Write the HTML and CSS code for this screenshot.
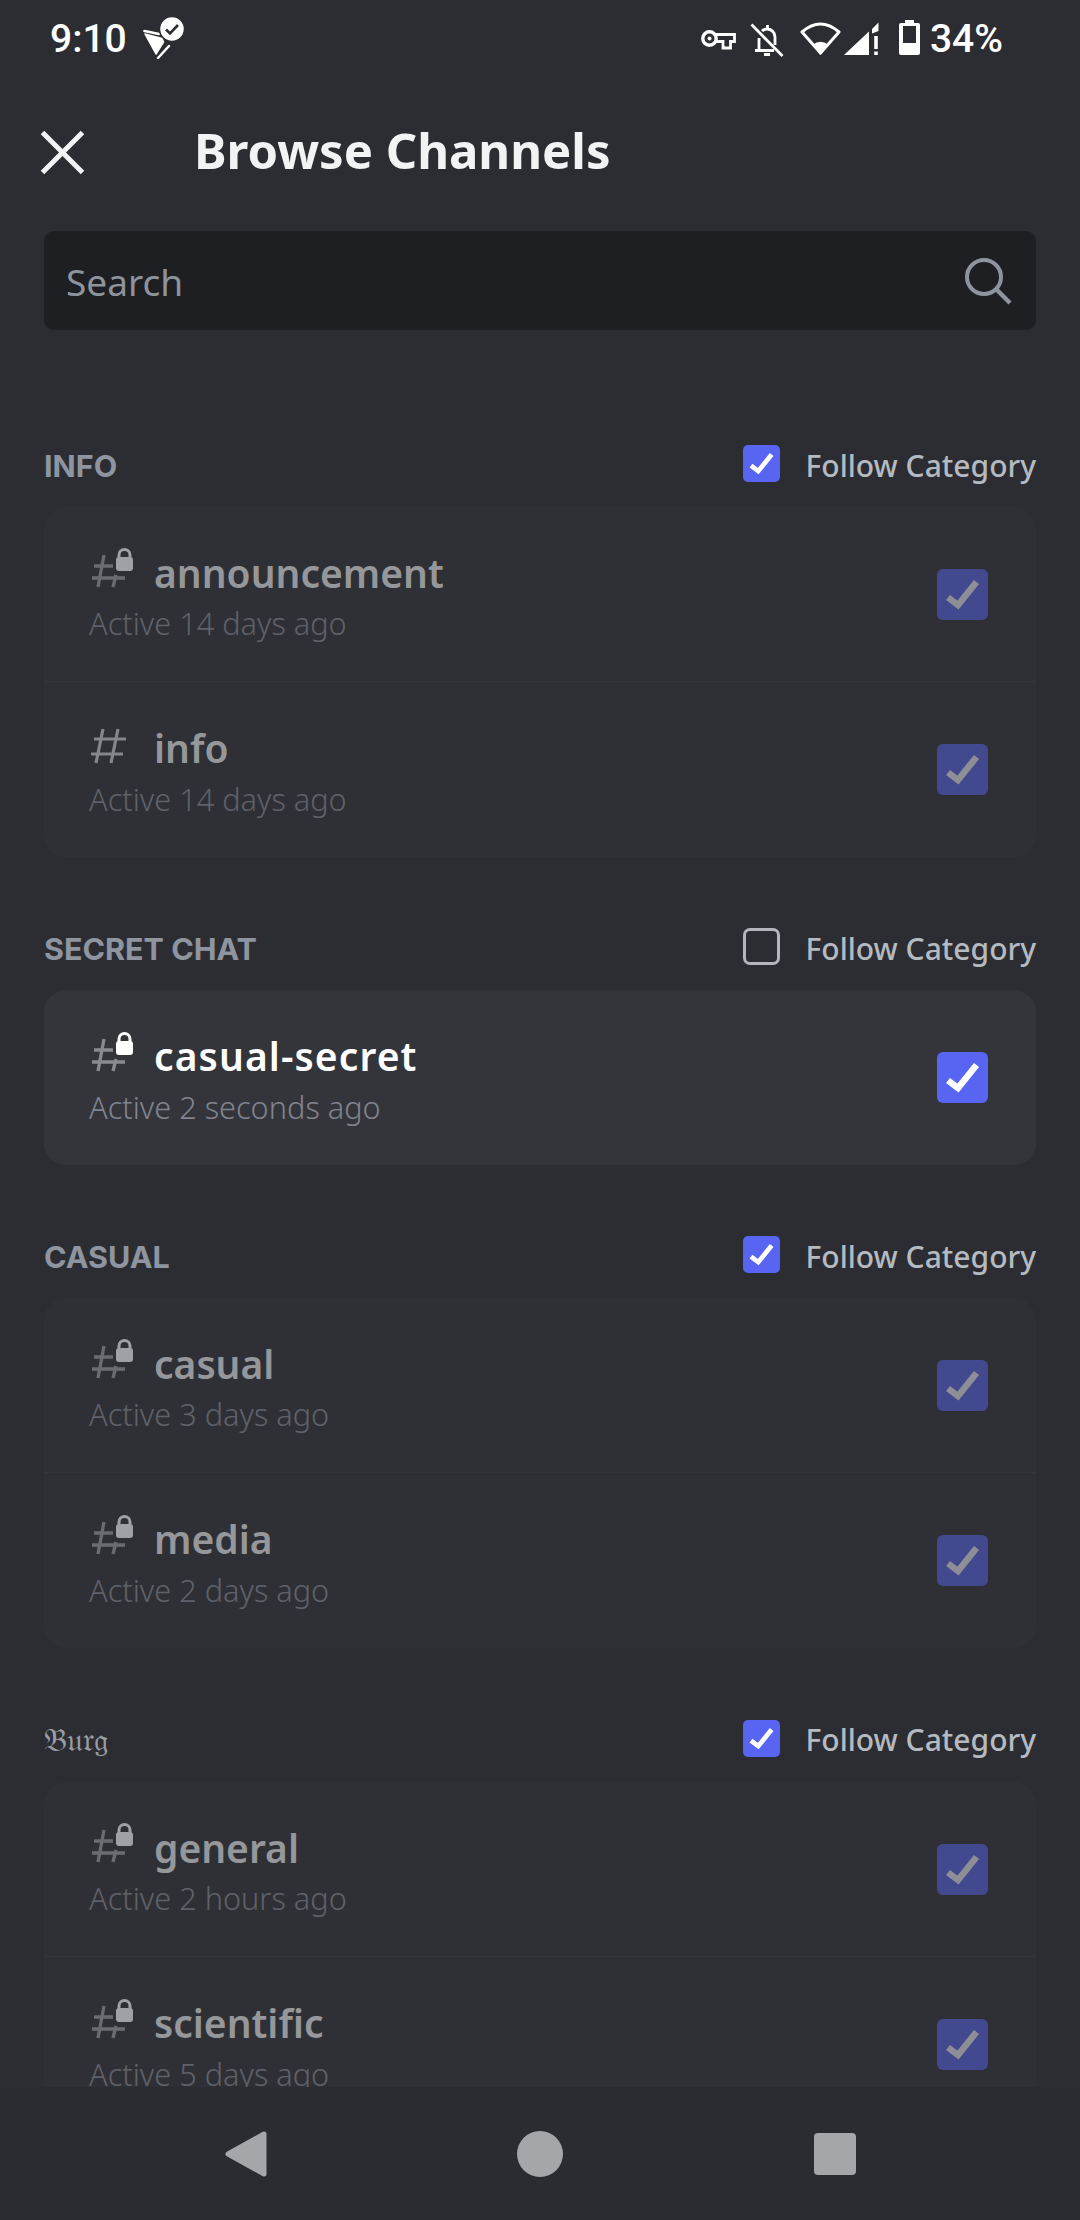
FILE: index.html
```html
<!DOCTYPE html>
<html lang="en">
<head>
    <meta charset="UTF-8">
    <meta name="viewport" content="width=device-width, initial-scale=1.0">
    <title>Browse Channels</title>
    <link rel="stylesheet" href="styles.css">
</head>
<body>
<svg class="defs" width="0" height="0">
    <defs>
        <symbol id="check" viewBox="0 0 51 51">
            <path d="M11 28.5 L21 36 L39.5 13" fill="none" stroke="currentColor" stroke-width="6.5"/>
        </symbol>
        <symbol id="hash" viewBox="0 0 44 42">
            <path d="M14 4 L7 38 M29 4 L22 38 M5 14 H37 M2 29 H34" fill="none" stroke="currentColor" stroke-width="3.2"/>
        </symbol>
        <symbol id="hash-lock" viewBox="0 0 44 42">
            <path d="M15 8 L9 40 M27 28 L24 40 M5 19 H24 M3 31 H36" fill="none" stroke="var(--hash)" stroke-width="3.3"/>
            <path d="M30 11 V8 A5.5 5.5 0 0 1 41 8 V11" fill="none" stroke="currentColor" stroke-width="3"/>
            <rect x="27" y="10" width="17" height="14" rx="3" fill="currentColor"/>
        </symbol>
    </defs>
</svg>

<div class="app">
    <div class="status-bar">
        <div class="status-left">
            <span class="status-text">9:10</span>
            <svg class="st-flag" width="41" height="42" viewBox="0 0 41 42">
                <path d="M1.5 14 L16 17" fill="none" stroke="#fff" stroke-width="2.6" stroke-linecap="round"/>
                <path d="M2 17 L19 21.5 L20.5 25 L13 37Z" fill="#fff" stroke="#fff" stroke-width="1.5" stroke-linejoin="round"/>
                <path d="M15 41 L26 29" stroke="#fff" stroke-width="2.5" stroke-linecap="round"/>
                <circle cx="29" cy="12" r="12.5" fill="#fff" stroke="#2c2d32" stroke-width="1.5"/>
                <path d="M23 12.5 L27 16.5 L35 8" fill="none" stroke="#2c2d32" stroke-width="2.6"/>
            </svg>
        </div>
        <div class="status-right">
            <svg class="st-key" width="35" height="20" viewBox="0 0 35 20">
                <circle cx="8.5" cy="8.5" r="6.7" fill="none" stroke="#fff" stroke-width="3.4"/>
                <circle cx="8.5" cy="8.5" r="2" fill="#fff"/>
                <path d="M15 4.5 H33.5 V11.5 H29.5 V18 H22 V11.5 H15" fill="none" stroke="#fff" stroke-width="2.8"/>
            </svg>
            <svg class="st-bell" width="34" height="35" viewBox="0 0 34 35">
                <path d="M5 27.5 H24 M9 15 V27 M25 22 V14 C25 9 21 6 17 6 C15 6 13 7 12 8 M14 31.5 H20 M17.5 2 V6" fill="none" stroke="#fff" stroke-width="2.8"/>
                <path d="M1.5 1.5 L32.5 33" stroke="#fff" stroke-width="2.8"/>
            </svg>
            <svg class="st-wifi" width="41" height="34" viewBox="0 0 41 34">
                <path d="M2 10 Q20.5 -6 39 10 L20.5 31Z" fill="none" stroke="#fff" stroke-width="3" stroke-linejoin="round"/>
                <path d="M12.5 23 Q20.5 16.5 28.5 23 L20.5 33Z" fill="#fff"/>
            </svg>
            <svg class="st-signal" width="35" height="34" viewBox="0 0 35 34">
                <path d="M0 33 L25 9.5 V33Z" fill="#fff"/>
                <path d="M34.5 0.5 V9 L28 11.5 V7Z" fill="#fff"/>
                <path d="M32 14 V27 M32 29.5 V33" stroke="#fff" stroke-width="3.6"/>
            </svg>
            <svg class="st-batt" width="21" height="35" viewBox="0 0 21 35">
                <path d="M6 0 H15 V3 H19 A2 2 0 0 1 21 5 V33 A2 2 0 0 1 19 35 H2 A2 2 0 0 1 0 33 V5 A2 2 0 0 1 2 3 H6Z M4 6 V23 H17 V6Z" fill="#fff" fill-rule="evenodd"/>
            </svg>
            <span class="status-text">34%</span>
        </div>
    </div>

    <div class="toolbar">
        <svg class="close-icon" width="45" height="45" viewBox="0 0 45 45">
            <path d="M2.5 2.5 L42.5 42.5 M42.5 2.5 L2.5 42.5" stroke="#f2f3f5" stroke-width="5"/>
        </svg>
        <h1 class="title">Browse Channels</h1>
    </div>

    <div class="search">
        <span class="search-text">Search</span>
        <svg width="48" height="48" viewBox="0 0 48 48">
            <circle cx="20" cy="20" r="17" fill="none" stroke="#8e949d" stroke-width="4"/>
            <path d="M32 32 L46 46" stroke="#8e949d" stroke-width="4.4"/>
        </svg>
    </div>

    <div class="list">
        <section>
            <div class="group-head">
                <span class="group-name">INFO</span>
                <label class="follow"><span class="box on"><svg width="37" height="37"><use href="#check"/></svg></span>Follow Category</label>
            </div>
            <div class="card muted">
                <div class="row">
                    <div class="row-text">
                        <div class="name-line"><svg class="ch-icon"><use href="#hash-lock"/></svg><span class="name">announcement</span></div>
                        <div class="sub">Active 14 days ago</div>
                    </div>
                    <span class="box big"><svg width="51" height="51"><use href="#check"/></svg></span>
                </div>
                <div class="row">
                    <div class="row-text">
                        <div class="name-line"><svg class="ch-icon plain"><use href="#hash"/></svg><span class="name">info</span></div>
                        <div class="sub">Active 14 days ago</div>
                    </div>
                    <span class="box big"><svg width="51" height="51"><use href="#check"/></svg></span>
                </div>
            </div>
        </section>

        <section>
            <div class="group-head">
                <span class="group-name">SECRET CHAT</span>
                <label class="follow"><span class="box off"></span>Follow Category</label>
            </div>
            <div class="card active">
                <div class="row">
                    <div class="row-text">
                        <div class="name-line"><svg class="ch-icon"><use href="#hash-lock"/></svg><span class="name wide">casual-secret</span></div>
                        <div class="sub">Active 2 seconds ago</div>
                    </div>
                    <span class="box big"><svg width="51" height="51"><use href="#check"/></svg></span>
                </div>
            </div>
        </section>

        <section>
            <div class="group-head">
                <span class="group-name">CASUAL</span>
                <label class="follow"><span class="box on"><svg width="37" height="37"><use href="#check"/></svg></span>Follow Category</label>
            </div>
            <div class="card muted">
                <div class="row">
                    <div class="row-text">
                        <div class="name-line"><svg class="ch-icon"><use href="#hash-lock"/></svg><span class="name">casual</span></div>
                        <div class="sub">Active 3 days ago</div>
                    </div>
                    <span class="box big"><svg width="51" height="51"><use href="#check"/></svg></span>
                </div>
                <div class="row">
                    <div class="row-text">
                        <div class="name-line"><svg class="ch-icon"><use href="#hash-lock"/></svg><span class="name">media</span></div>
                        <div class="sub">Active 2 days ago</div>
                    </div>
                    <span class="box big"><svg width="51" height="51"><use href="#check"/></svg></span>
                </div>
            </div>
        </section>

        <section>
            <div class="group-head burg">
                <span class="group-name fraktur">𝔅𝔲𝔯𝔤</span>
                <label class="follow"><span class="box on"><svg width="37" height="37"><use href="#check"/></svg></span>Follow Category</label>
            </div>
            <div class="card muted">
                <div class="row">
                    <div class="row-text">
                        <div class="name-line"><svg class="ch-icon"><use href="#hash-lock"/></svg><span class="name">general</span></div>
                        <div class="sub">Active 2 hours ago</div>
                    </div>
                    <span class="box big"><svg width="51" height="51"><use href="#check"/></svg></span>
                </div>
                <div class="row">
                    <div class="row-text">
                        <div class="name-line"><svg class="ch-icon"><use href="#hash-lock"/></svg><span class="name">scientific</span></div>
                        <div class="sub">Active 5 days ago</div>
                    </div>
                    <span class="box big"><svg width="51" height="51"><use href="#check"/></svg></span>
                </div>
            </div>
        </section>
    </div>

    <div class="nav-bar">
        <svg width="44" height="46" viewBox="0 0 44 46">
            <path d="M39 3 V43 L3 23Z" fill="#a5a6a9" stroke="#a5a6a9" stroke-width="5" stroke-linejoin="round"/>
        </svg>
        <span class="nav-circle"></span>
        <span class="nav-square"></span>
    </div>
</div>
</body>
</html>
```

FILE: styles.css
```css
body {
    margin: 0;
    padding: 0;
    background-color: #2c2d32;
    font-family: "Noto Sans", sans-serif;
}
.defs {
    display: block;
    height: 0;
}
.app {
    width: 1080px;
    height: 2220px;
    display: flex;
    flex-direction: column;
    overflow: hidden;
    background-color: #2c2d32;
}

/* status bar */
.status-bar {
    height: 81px;
    flex: none;
    display: flex;
    justify-content: space-between;
    align-items: flex-start;
    padding: 17px 77px 0 50px;
    box-sizing: border-box;
}
.status-left, .status-right {
    display: flex;
    align-items: flex-start;
}
.status-text {
    font-family: Roboto, sans-serif;
    font-size: 39px;
    font-weight: 500;
    line-height: 44px;
    color: #fff;
}
.st-flag { margin: 0 0 0 16px; }
.st-key { margin-top: 13px; }
.st-bell { margin: 6px 0 0 14px; }
.st-wifi { margin: 5px 0 0 16px; }
.st-signal { margin: 5px 0 0 3px; }
.st-batt { margin: 3px 10px 0 20px; }

/* toolbar */
.toolbar {
    height: 150px;
    flex: none;
    display: flex;
    align-items: center;
    padding: 0 0 8px 40px;
    box-sizing: border-box;
}
.close-icon { flex: none; }
.title {
    margin: 0 0 5px 109px;
    font-size: 49px;
    font-weight: 700;
    color: #f2f3f5;
}

.search {
    height: 99px;
    flex: none;
    margin: 0 44px;
    padding: 0 24px 0 22px;
    display: flex;
    align-items: center;
    justify-content: space-between;
    background-color: #1e1f23;
    border-radius: 10px;
}
.search-text {
    font-size: 37px;
    padding-top: 2px;
    color: #8e949d;
}

/* channel list */
.list {
    flex: 1;
    min-height: 0;
    overflow: hidden;
    margin-top: 44px;
    padding: 0 44px;
}
.group-head {
    height: 133px;
    box-sizing: border-box;
    padding: 69px 0 20px;
    display: flex;
    align-items: center;
    justify-content: space-between;
}
.group-head.burg {
    height: 134px;
}
.group-name {
    font-family: Inter, "Noto Sans", sans-serif;
    font-size: 30.5px;
    font-weight: 700;
    color: #8e95a0;
}
.fraktur {
    font-family: "DejaVu Serif", "DejaVu Sans", serif;
    font-size: 32px;
    font-weight: 400;
    color: #9a9da3;
}
.follow {
    display: flex;
    align-items: center;
    font-size: 30px;
    font-weight: 500;
    color: #b5bac1;
}
.box {
    display: block;
    flex: none;
    box-sizing: border-box;
}
.box svg { display: block; }
.follow .box {
    width: 37px;
    height: 37px;
    margin: -3px 26px 0 0;
    border-radius: 5px;
}
.box.on {
    background-color: #5865f2;
    color: #fff;
}
.box.off {
    border: 3.5px solid #b3b6bc;
    border-radius: 7px;
}
.box.big {
    width: 51px;
    height: 51px;
    border-radius: 6px;
}
.card {
    border-radius: 22px;
    overflow: hidden;
}
.row {
    height: 175px;
    box-sizing: border-box;
    padding: 0 48px 0 45px;
    display: flex;
    align-items: center;
    justify-content: space-between;
    border-bottom: 1px solid #34353a;
}
.row:last-child {
    border-bottom: none;
}
.row-text {
    padding-top: 2px;
}
.name-line {
    display: flex;
    align-items: center;
    height: 52px;
}
.ch-icon {
    width: 44px;
    height: 42px;
    margin: 0 21px 8px 0;
    flex: none;
}
.ch-icon.plain {
    margin-bottom: 4px;
}
.name {
    font-size: 39px;
    font-weight: 600;
}
.name.wide {
    letter-spacing: 1.1px;
}
.sub {
    margin-top: 4px;
    font-size: 30.7px;
    font-weight: 300;
    line-height: 42px;
}

.card.muted {
    background-color: #2f3035;
    --hash: #6b6c71;
}
.muted .ch-icon { color: #a0a1a5; }
.muted .ch-icon.plain { color: #85868a; }
.muted .name { color: #96979b; }
.muted .sub { color: #5f6269; }
.muted .box.big {
    background-color: #43498f;
    color: #8d8e96;
}

.card.active {
    background-color: #33353b;
    --hash: #8a8b90;
}
.active .ch-icon { color: #fff; }
.active .name { color: #fff; }
.active .sub { color: #80848e; }
.active .box.big {
    background-color: #5865f2;
    color: #fff;
}

/* nav bar */
.nav-bar {
    height: 133px;
    flex: none;
    display: grid;
    grid-template-columns: 450px 180px 450px;
    place-items: center;
    background-color: #2b2c31;
}
.nav-bar svg { justify-self: end; margin-right: 181px; }
.nav-circle {
    width: 46px;
    height: 46px;
    border-radius: 50%;
    background-color: #a5a6a9;
}
.nav-square {
    width: 42px;
    height: 42px;
    justify-self: start;
    margin-left: 184px;
    border-radius: 4px;
    background-color: #a5a6a9;
}
```
